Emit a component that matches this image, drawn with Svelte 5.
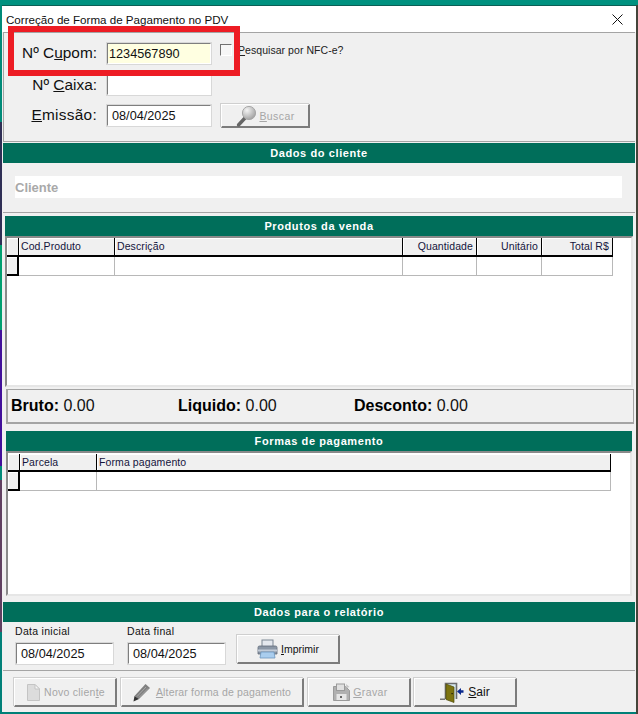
<script>
  const produtos = [
    { label: 'Cod.Produto', align: 'left' },
    { label: 'Descrição', align: 'left' },
    { label: 'Quantidade', align: 'right' },
    { label: 'Unitário', align: 'right' },
    { label: 'Total R$', align: 'right' }
  ];
  const formas = [
    { label: 'Parcela', align: 'left' },
    { label: 'Forma pagamento', align: 'left' }
  ];
</script>

<div class="stage">
  <div class="window">
    <div class="title">
      <span>Correção de Forma de Pagamento no PDV</span>
      <svg class="close" width="11" height="11" viewBox="0 0 11 11"><path d="M.5.5l10 10M10.5.5l-10 10" stroke="#111" stroke-width="1" fill="none"/></svg>
    </div>

    <section class="search">
      <label class="lbl" for="cupom">Nº C<u>u</u>pom:</label>
      <div class="input yellow field" id="cupom">1234567890</div>
      <div class="check"><span class="box"></span><span><u>P</u>esquisar por NFC-e?</span></div>

      <label class="lbl" for="caixa">Nº <u>C</u>aixa:</label>
      <div class="input field short" id="caixa"></div>
      <div></div>

      <label class="lbl em" for="emissao"><u>E</u>missão:</label>
      <div class="input field date" id="emissao">08/04/2025</div>
      <button class="btn off buscar" disabled>
        <svg width="24" height="24" viewBox="0 0 24 24">
          <defs><radialGradient id="lens" cx=".35" cy=".3" r=".8"><stop offset="0" stop-color="#f4f4f4"/><stop offset="1" stop-color="#9a9a9a"/></radialGradient></defs>
          <path d="M10 14L3.5 21" stroke="#666" stroke-width="3.4" stroke-linecap="round"/>
          <circle cx="14" cy="9" r="6.6" fill="url(#lens)" stroke="#a8a8a8"/>
        </svg>
        <span><u>B</u>uscar</span>
      </button>
    </section>

    <div class="bar bar-full first">Dados do cliente</div>
    <section class="cliente"><div class="cliente-field">Cliente</div></section>

    <div class="bar bar-produtos">Produtos da venda</div>
    <div class="grid-wrap produtos">
      <div class="grid cols-prod">
        <div class="ind"></div>
        {#each produtos as c}<div class="head" class:right={c.align === 'right'}>{c.label}</div>{/each}
        <div class="ind row"></div>
        {#each produtos as c}<div class="cell"></div>{/each}
      </div>
    </div>

    <section class="totais">
      <div><b>Bruto:</b> 0.00</div>
      <div><b>Liquido:</b> 0.00</div>
      <div><b>Desconto:</b> 0.00</div>
    </section>

    <div class="bar bar-formas">Formas de pagamento</div>
    <div class="grid-wrap formas">
      <div class="grid cols-form">
        <div class="ind"></div>
        {#each formas as c}<div class="head">{c.label}</div>{/each}
        <div class="ind row"></div>
        {#each formas as c}<div class="cell"></div>{/each}
      </div>
    </div>

    <div class="bar bar-full rel">Dados para o relatório</div>
    <section class="relatorio">
      <div class="dt">
        <span class="cap">Data inicial</span>
        <div class="input date-r">08/04/2025</div>
      </div>
      <div class="dt">
        <span class="cap">Data final</span>
        <div class="input date-r">08/04/2025</div>
      </div>
      <button class="btn imprimir">
        <svg width="21" height="20" viewBox="0 0 21 20">
          <rect x="5" y="1" width="11" height="7" fill="#e4e8ee" stroke="#7d8794"/>
          <path d="M1 8.5q0-1.500 1.500-1.500h16q1.500 0 1.500 1.500V15H1z" fill="#8b97a6" stroke="#5f6b7a" stroke-width=".8"/>
          <rect x="1" y="10.500" width="19" height="2" fill="#c3ccd8"/>
          <path d="M4 13h13l1 6H3z" fill="#a9cdee" stroke="#6d95bd" stroke-width=".8"/>
        </svg>
        <span><u>I</u>mprimir</span>
      </button>
    </section>

    <footer class="actions">
      <button class="btn off a1" disabled>
        <svg width="13" height="17" viewBox="0 0 13 17"><path d="M.5.500H8L12.500 5v11.500H.5z" fill="#dcdcdc" stroke="#c4c4c4"/><path d="M8 .5V5h4.500z" fill="#f5f5f5" stroke="#c4c4c4"/></svg>
        <span>Novo clien<u>t</u>e</span>
      </button>
      <button class="btn off a2" disabled>
        <svg width="18" height="19" viewBox="0 0 18 19"><path d="M12.500 1l4.500 4L6 16l-4.500-3z" fill="#808080"/><path d="M13 4l-9 9.500M15 5.500l-9 9" stroke="#a8a8a8" stroke-width="1"/><path d="M1.500 13L6 16 .5 18.500z" fill="#333"/></svg>
        <span><u>A</u>lterar forma de pagamento</span>
      </button>
      <button class="btn off a3" disabled>
        <svg width="17" height="18" viewBox="0 0 17 18"><path d="M.5 3.500h12l4 4v10H.5z" fill="#b0b0b0" stroke="#9a9a9a"/><rect x="3.500" y="1" width="8" height="6.500" fill="#e0e0e0" stroke="#9a9a9a"/><rect x="3.500" y="11" width="10" height="6" fill="#e6e6e6"/><rect x="7" y="13" width="2" height="2" fill="#666"/><path d="M13 1l3.500 3-3 1z" fill="#c4c4c4"/></svg>
        <span><u>G</u>ravar</span>
      </button>
      <button class="btn a4">
        <svg width="24" height="21" viewBox="0 0 24 21">
          <path d="M5.500 17V1.500h11V17" fill="#d6e8f0" stroke="#6c6c6c" stroke-width="1.600"/>
          <path d="M0 16.500h5v1.500H0z" fill="#777"/>
          <path d="M6 2l8 3v15.500l-8-3z" fill="#7d7410" stroke="#4f4a08" stroke-width=".7"/>
          <rect x="11.500" y="11" width="1.200" height="1.200" fill="#111"/>
          <path d="M17 9.500l4-3.500v2.300h2.500v2.400H21V13z" fill="#0b2a8f"/>
        </svg>
        <span><u>S</u>air</span>
      </button>
    </footer>
  </div>
</div>

<style>
  :global(body) { margin: 0; }
  .stage {
    width: 638px; height: 714px; overflow: hidden; box-sizing: border-box; padding: 5px 0 0 2px;
    background:
      linear-gradient(#00917f 0 5px, transparent 5px),
      linear-gradient(90deg, transparent 636px, #44443a 636px),
      linear-gradient(#008a78 0 122px, #2f2f55 122px 245px, #00a070 245px 330px, #42109a 330px 466px, #008a78 466px 480px, #604060 480px 632px, #008078 632px);
    font-family: "Liberation Sans", Arial, sans-serif;
    color: #000;
  }
  .window {
    width: 634px; height: 707px; box-sizing: border-box; padding: 1px 1px 0 1px;
    background: #f0f0f0; border-top: 0; box-shadow: inset 0 1px 0 #0b5f55;
    position: relative;
  }
  .title {
    height: 26px; background: #fff; display: flex; align-items: center; justify-content: space-between;
    font-size: 11.6px; padding: 0 13px 0 4px; margin: 0 -1px; color: #111;
  }
  .close { flex: none; }

  .search {
    height: 110px; box-sizing: border-box; border-top: 1px solid #a4a4a4; border-bottom: 1px solid #a4a4a4;
    border-left: 1px solid #a4a4a4; padding: 9px 0 0 0;
    display: grid; grid-template-columns: 93px 106px 1fr; column-gap: 0;
    grid-template-rows: 32px 30px 25px; position: relative;
  }
  .search::before {
    content: ""; position: absolute; left: 4px; top: -7px; width: 220px; height: 38px;
    border: 6px solid #ed1c24; pointer-events: none; z-index: 2;
  }
  .lbl { font-size: 15.4px; text-align: right; align-self: start; line-height: 22px; color: #111; }
  .em { letter-spacing: .28px; }
  .input {
    box-sizing: border-box; border: 2px solid; border-color: #7e7e7e #fff #fff #7e7e7e;
    outline: 1px solid #d8d8d8; outline-offset: -1px;
    background: #fff; display: flex; align-items: center; font-size: 12.7px; color: #111;
  }
  .field { margin-left: 9px; width: 106px; height: 23px; padding-left: 1px; }
  .short { height: 22px; }
  .date { padding-left: 4px; }
  .yellow { background: #ffffe1; }
  .check { display: flex; align-items: flex-start; font-size: 10.5px; letter-spacing: .05px; margin-left: 17px; margin-top: 2px; color: #222; }
  .box {
    flex: none; width: 12px; height: 12px; box-sizing: border-box; background: #f6f6f6;
    border: 1px solid; border-color: #707070 #fff #fff #707070; margin-right: 6px;
  }
  .check span:last-child { line-height: 12px; }

  .btn {
    box-sizing: border-box; display: flex; align-items: center; justify-content: center; gap: 3px;
    background: #f0f0f0; border: 1px solid; border-color: #fff #7c7c7c #7c7c7c #fff;
    border-width: 1px 2px 2px 1px; box-shadow: -1px -1px 0 #cfcfcf; padding: 0; margin: 0;
    font-family: inherit; font-size: 10.5px; letter-spacing: .4px; color: #111;
  }
  .btn.off { color: #a6a6a6; }
  .buscar { margin-left: 18px; width: 89px; height: 24px; gap: 0; }

  .bar {
    height: 20px; background: #006e5a; color: #fff; font-weight: 700; font-size: 11px; letter-spacing: .6px;
    text-align: center; line-height: 20px; box-sizing: border-box;
  }
  .first { margin-top: 1px; }
  .cliente { height: 49px; border-bottom: 1px solid #a4a4a4; box-sizing: content-box; padding: 0; }
  .cliente-field {
    margin: 13px 13px 0 12px; height: 22px; background: #fff; color: #a9a9a9; font-weight: 700; font-size: 13px;
    line-height: 23px; position: relative; top: 0;
  }
  .cliente { display: flow-root; }
  .bar-produtos { margin: 3px 2px 0 2px; }
  .grid-wrap {
    box-sizing: border-box; background: #fff; border-top: 2px solid #8a8a8a; border-left: 2px solid #8a8a8a;
    border-right: 2px solid #e6e6e6; border-bottom: 2px solid #e6e6e6;
  }
  .produtos { margin: 0 2px 0 2px; height: 151px; }
  .formas { margin: 0 3px 0 3px; height: 145px; }
  .grid { display: grid; }
  .cols-prod { grid-template-columns: 12px 96px 288px 74px 65px 71px; grid-template-rows: 19px 19px; }
  .cols-form { grid-template-columns: 12px 77px 514px; grid-template-rows: 18px 19px; margin-top: 1px; }
  .head {
    box-sizing: border-box; background: #f0f0f0; border-right: 1px solid #000; border-bottom: 2px solid #000;
    box-shadow: inset 1px 1px 0 #fff; font-size: 10.5px; letter-spacing: .1px; color: #14143c;
    padding: 0 3px 0 2px; line-height: 17px; white-space: nowrap; overflow: hidden;
  }
  .head.right { text-align: right; }
  .ind {
    box-sizing: border-box; background: #f0f0f0; border-right: 1px solid #000; border-bottom: 2px solid #000;
    box-shadow: inset 1px 1px 0 #fff;
  }
  .ind.row { border-right-width: 2px; border-bottom: 2px solid #000; width: 12px; }
  .cell { box-sizing: border-box; background: #fff; border-right: 1px solid #b8b8b8; border-bottom: 1px solid #b8b8b8; }

  .totais {
    margin: 0 1px 0 3px; height: 35px; box-sizing: border-box; border: 2px solid #a4a4a4; border-top-width: 1px; border-right-width: 1px;
    display: grid; grid-template-columns: 167px 176px 1fr; align-items: center; padding-left: 3px;
    font-size: 16px; color: #111; margin-top: 2px; letter-spacing: 0;
  }
  .totais b { color: #000; }
  .bar-formas { margin: 7px 3px 0 3px; }
  .rel { margin-top: 6px; }

  .relatorio {
    height: 49px; box-sizing: border-box; border-bottom: 1px solid #a4a4a4; display: flex; padding-left: 12px; position: relative;
  }
  .dt { width: 112px; display: flex; flex-direction: column; }
  .cap { font-size: 10.5px; letter-spacing: .3px; line-height: 12px; margin-top: 3px; color: #111; }
  .date-r { width: 99px; height: 23px; margin-top: 5px; padding-left: 4px; }
  .imprimir { width: 103px; height: 29px; margin: 13px 0 0 -2px; gap: 3px; letter-spacing: 0; font-size: 10.5px; }

  .actions { display: flex; padding: 7px 0 0 11px; }
  .actions .btn { height: 29px; }
  .a1 { width: 103px; gap: 4px; letter-spacing: .25px; padding-left: 2px; }
  .a2 { width: 183px; margin-left: 4px; gap: 5px; letter-spacing: .17px; }
  .a3 { width: 103px; margin-left: 4px; padding-left: 3px; }
  .a4 { width: 103px; margin-left: 3px; font-size: 12px; letter-spacing: 0; gap: 4px; }
</style>
